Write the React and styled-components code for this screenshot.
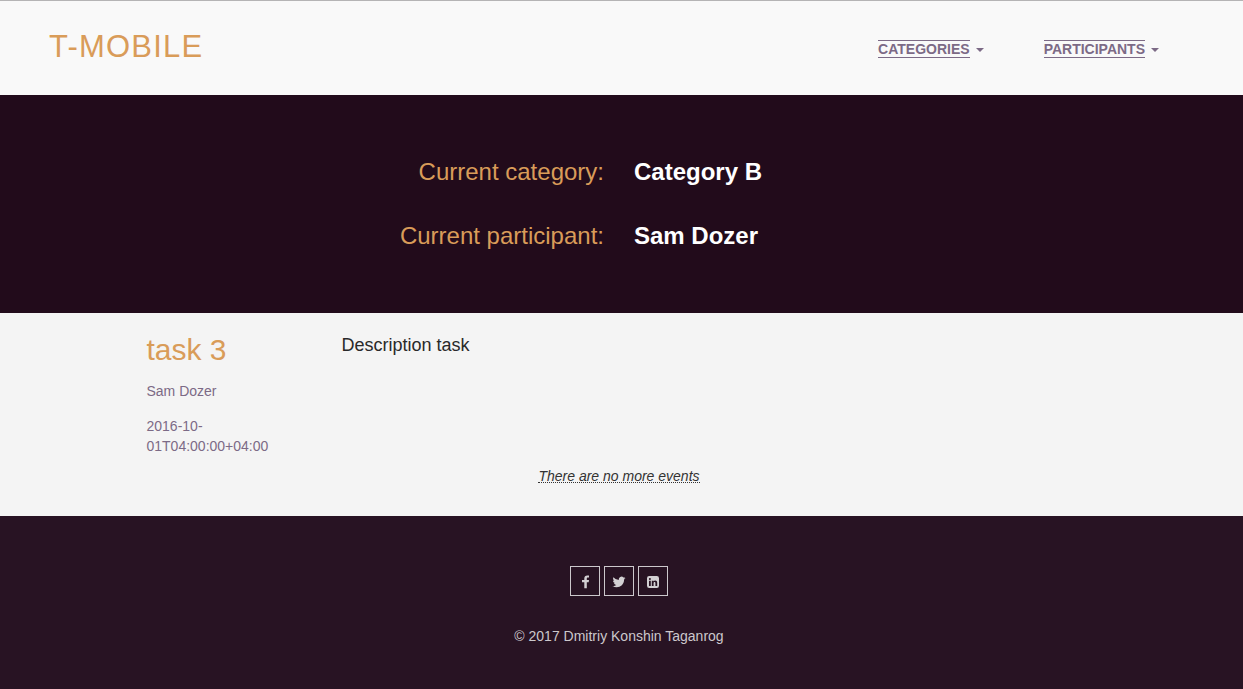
import React from "react";
import styled, { createGlobalStyle } from "styled-components";

const Global = createGlobalStyle`
  * { box-sizing: border-box; }
  body {
    margin: 0;
    background: #281323;
    color: #333;
    font-family: "Liberation Sans", Arial, sans-serif;
    font-size: 14px;
    line-height: 20px;
  }
`;

const Header = styled.header`
  display: flex;
  justify-content: space-between;
  align-items: flex-start;
  height: 95px;
  padding: 28px 84px 0 49px;
  border-top: 1px solid #b5b4b5;
  background: #f9f9f9;
`;

const Brand = styled.a`
  color: #d99c59;
  font-size: 31px;
  line-height: 35px;
  letter-spacing: 1.2px;
  text-transform: uppercase;
`;

const Nav = styled.nav`
  display: flex;
  gap: 60px;
  padding-top: 11px;
`;

const NavItem = styled.a`
  display: flex;
  align-items: center;
  gap: 6px;
  color: #7c6a86;
`;

const NavLabel = styled.span`
  height: 18px;
  border: solid #7c6a86;
  border-width: 1px 0;
  font-weight: bold;
  line-height: 17px;
  text-transform: uppercase;
`;

const Caret = styled.span`
  margin-top: 2px;
  border-top: 4px solid #7c6a86;
  border-left: 4px solid transparent;
  border-right: 4px solid transparent;
`;

const Hero = styled.section`
  display: grid;
  grid-template-columns: 604px 1fr;
  grid-auto-rows: 26px;
  gap: 38px 30px;
  height: 218px;
  padding-top: 64px;
  background: #220b1b;
  font-size: 24px;
  line-height: 26px;
`;

const Label = styled.span`
  color: #d99c59;
  text-align: right;
`;

const Value = styled.strong`
  color: #fff;
`;

const Events = styled.main`
  height: 203px;
  padding-top: 20px;
  background: #f4f4f4;
`;

const Event = styled.article`
  display: grid;
  grid-template-columns: 165px 1fr;
  column-gap: 30px;
  padding: 0 147px 0 146.5px;
`;

const Title = styled.h2`
  margin: 0 0 15px;
  color: #d99c59;
  font-size: 30px;
  font-weight: normal;
  line-height: 33px;
`;

const Meta = styled.p`
  width: 135px;
  margin: 0 0 15px;
  color: #7c6a86;
`;

const Description = styled.p`
  margin: 0;
  color: #292929;
  font-size: 18px;
  line-height: 24px;
`;

const Notice = styled.div`
  display: flex;
  justify-content: center;
  margin-top: -5px;
  padding-right: 5px;
`;

const NoticeText = styled.em`
  height: 17px;
  border-bottom: 1px dotted #333;
`;

const Footer = styled.footer`
  display: flex;
  flex-direction: column;
  align-items: center;
  height: 173px;
  padding: 50px 5px 0 0;
  background: #281323;
  color: #ccc8cc;
`;

const Social = styled.div`
  display: flex;
  gap: 4px;
  margin-bottom: 30px;
`;

const SocialLink = styled.a`
  display: flex;
  align-items: center;
  justify-content: center;
  width: 30px;
  height: 30px;
  padding-top: 2px;
  border: 1px solid #ccc8cc;
`;

const Copyright = styled.p`
  margin: 0;
`;

const icons = {
  facebook: "M11 2.5V.6C10.7.55 10 .5 9.3.5 7.4.5 6.3 1.6 6.3 3.5V5.1H4v2.2h2.3v5.9h2.5V7.3h1.9l.3-2.2H8.8V3.8c0-.9.2-1.3 1.2-1.3z",
  twitter: "M13.5 2.9c-.5.2-1 .4-1.5.4.5-.3 1-.8 1.2-1.4-.5.3-1.1.5-1.7.6A2.7 2.7 0 0 0 6.9 5 7.6 7.6 0 0 1 1.4 2.2c-.7 1.2-.3 2.7.8 3.5-.4 0-.8-.1-1.2-.3 0 1.3.9 2.4 2.1 2.7-.4.1-.8.1-1.2 0 .3 1.1 1.3 1.8 2.5 1.9-1.1.9-2.5 1.3-4 1.1C5.7 14.2 12.2 11 12.1 4.4c.6-.4 1-.9 1.4-1.5z",
  linkedin: "M3.2 1h7.6A2.2 2.2 0 0 1 13 3.2v7.6a2.2 2.2 0 0 1-2.2 2.2H3.2A2.2 2.2 0 0 1 1 10.8V3.2A2.2 2.2 0 0 1 3.2 1zM3 5.7V11h1.8V5.7zM3.9 3a1 1 0 1 0 0 2 1 1 0 0 0 0-2zM5.8 5.7V11h1.8V8c0-.6.4-1.1 1-1.1s.8.5.8 1.2V11h1.8V7.9c0-1.6-.8-2.4-2-2.4-.8 0-1.3.4-1.6.9v-.7z",
};

function SocialIcon({ name }) {
  return (
    <SocialLink aria-label={name}>
      <svg width="14" height="14" viewBox="0 0 14 14" fill="#d3d0d3" fillRule="evenodd">
        <path d={icons[name]} />
      </svg>
    </SocialLink>
  );
}

export default function App() {
  return (
    <>
      <Global />
      <Header>
        <Brand>T-Mobile</Brand>
        <Nav>
          {["Categories", "Participants"].map((name) => (
            <NavItem key={name}>
              <NavLabel>{name}</NavLabel>
              <Caret />
            </NavItem>
          ))}
        </Nav>
      </Header>
      <Hero>
        <Label>Current category:</Label>
        <Value>Category B</Value>
        <Label>Current participant:</Label>
        <Value>Sam Dozer</Value>
      </Hero>
      <Events>
        <Event>
          <div>
            <Title>task 3</Title>
            <Meta>Sam Dozer</Meta>
            <Meta>2016-10-01T04:00:00+04:00</Meta>
          </div>
          <Description>Description task</Description>
        </Event>
        <Notice>
          <NoticeText>There are no more events</NoticeText>
        </Notice>
      </Events>
      <Footer>
        <Social>
          <SocialIcon name="facebook" />
          <SocialIcon name="twitter" />
          <SocialIcon name="linkedin" />
        </Social>
        <Copyright>© 2017 Dmitriy Konshin Taganrog</Copyright>
      </Footer>
    </>
  );
}
